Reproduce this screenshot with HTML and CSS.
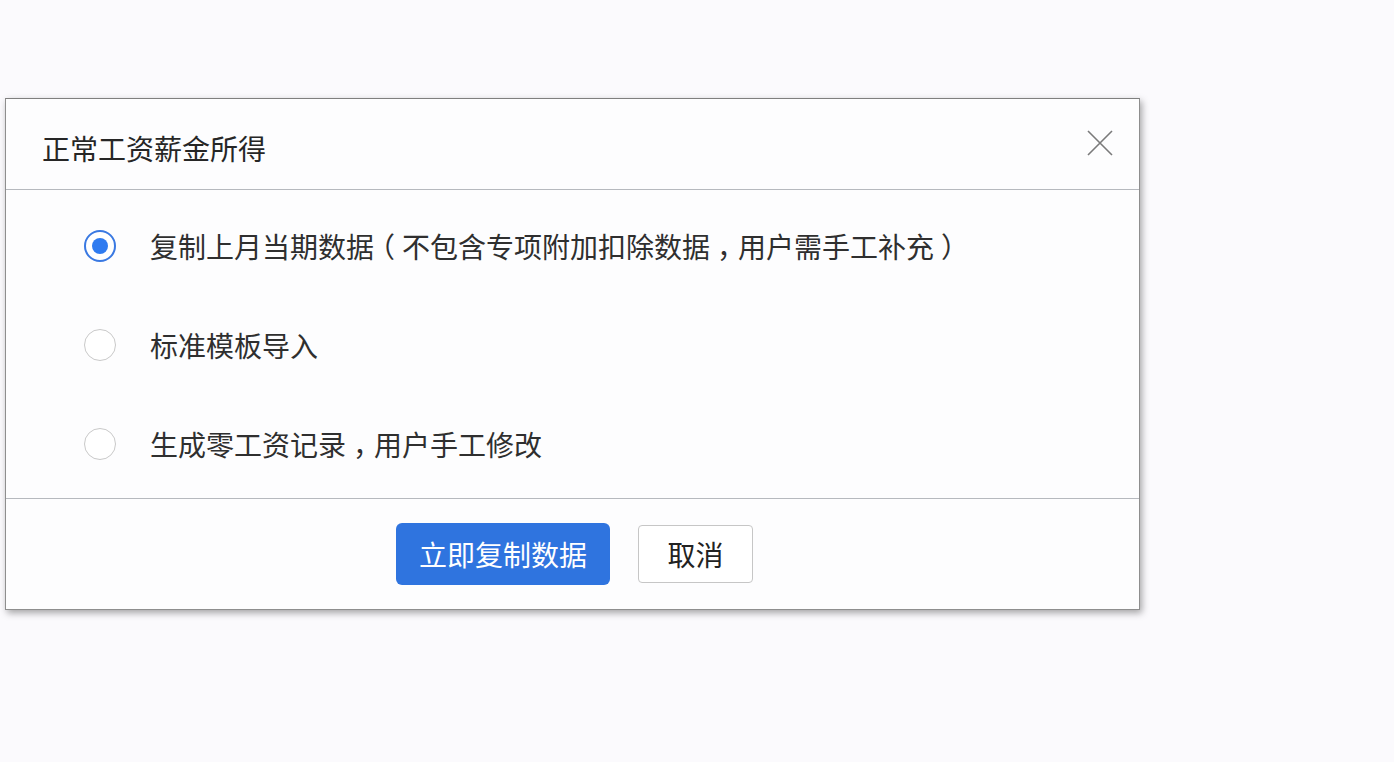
FILE: index.html
```html
<!DOCTYPE html>
<html lang="zh-CN">
<head>
<meta charset="utf-8">
<title>正常工资薪金所得</title>
<link rel="stylesheet" href="styles.css">
</head>
<body>
<div class="dialog">
  <div class="dialog-header">
    <div class="dialog-title">正常工资薪金所得</div>
    <button class="close-btn" aria-label="关闭">
      <svg width="26" height="26" viewBox="0 0 26 26"><path d="M1 1 L25 25 M25 1 L1 25" stroke="#7a7a7a" stroke-width="1.6" fill="none"/></svg>
    </button>
  </div>
  <div class="dialog-body">
    <label class="option">
      <span class="radio radio-checked"><span class="radio-dot"></span></span>
      <span class="option-text">复制上月当期数据<span class="punct">（</span>不包含专项附加扣除数据<span class="punct">，</span>用户需手工补充<span class="punct">）</span></span>
    </label>
    <label class="option">
      <span class="radio"></span>
      <span class="option-text">标准模板导入</span>
    </label>
    <label class="option">
      <span class="radio"></span>
      <span class="option-text">生成零工资记录<span class="punct">，</span>用户手工修改</span>
    </label>
  </div>
  <div class="dialog-footer">
    <button class="btn btn-primary">立即复制数据</button>
    <button class="btn btn-default">取消</button>
  </div>
</div>
</body>
</html>
```
FILE: styles.css
```css
html, body {
  margin: 0;
  padding: 0;
}
body {
  background: #fbfafd;
  font-family: "Noto Sans CJK SC", "Microsoft YaHei", sans-serif;
  color: #333;
  padding: 98px 0 0 5px;
  height: 762px;
  box-sizing: border-box;
}
.dialog {
  width: 1135px;
  background: #fdfdfe;
  border: 1px solid #8e8e8e;
  border-top-color: #7f7f7f;
  box-shadow: 2px 3px 7px rgba(0, 0, 0, 0.35);
  box-sizing: border-box;
}
.dialog-header {
  height: 91px;
  display: flex;
  align-items: center;
  justify-content: space-between;
  padding: 0 26px 0 36px;
  border-bottom: 1px solid #b6b9be;
  box-sizing: border-box;
}
.dialog-title {
  font-size: 28px;
  line-height: 40px;
  color: #262626;
  margin-top: 8px;
}
.close-btn {
  border: none;
  background: transparent;
  padding: 0;
  width: 26px;
  height: 26px;
  margin-top: -2px;
  display: flex;
}
.dialog-body {
  display: flex;
  flex-direction: column;
  gap: 39px;
  padding: 26px 0 24px 78px;
  border-bottom: 1px solid #b6b9be;
}
.option {
  height: 60px;
  display: flex;
  align-items: center;
}
.radio {
  width: 32px;
  height: 32px;
  border-radius: 50%;
  border: 1px solid #c9c9c9;
  box-sizing: border-box;
  background: #fff;
  display: flex;
  align-items: center;
  justify-content: center;
  flex: none;
}
.radio-checked {
  border: 2px solid #3a79e2;
}
.radio-dot {
  width: 16px;
  height: 16px;
  border-radius: 50%;
  background: #2f7bf0;
}
.option-text {
  margin-left: 34px;
  font-size: 28px;
  line-height: 40px;
  color: #2f2f2f;
}
.punct {
  font-feature-settings: "halt" 1;
  padding: 0 7px;
}
.dialog-footer {
  height: 110px;
  display: flex;
  align-items: center;
  justify-content: center;
  gap: 28px;
  padding-left: 4px;
}
.btn {
  font-family: "Noto Sans CJK SC", "Microsoft YaHei", sans-serif;
  font-size: 28px;
  line-height: 40px;
  box-sizing: border-box;
  cursor: pointer;
}
.btn-primary {
  width: 214px;
  height: 62px;
  background: #2f74df;
  color: #fff;
  border: none;
  border-radius: 6px;
}
.btn-default {
  width: 115px;
  height: 58px;
  background: #fff;
  color: #222;
  border: 1px solid #c6c6c6;
  border-radius: 4px;
}
```
